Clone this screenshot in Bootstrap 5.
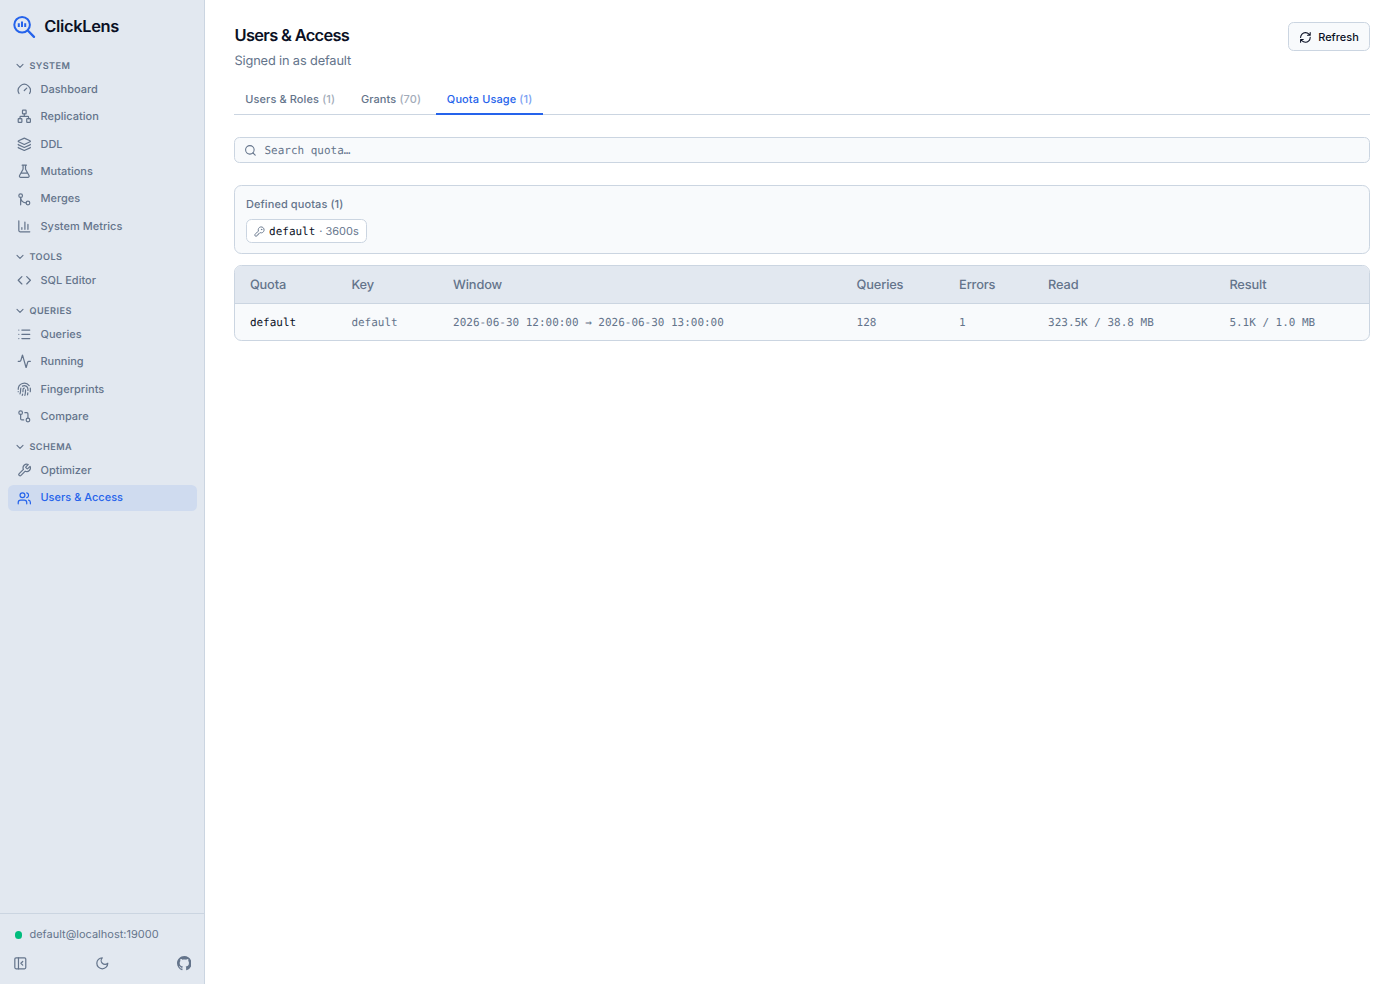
<!DOCTYPE html>
<html lang="en">
<head>
<meta charset="utf-8">
<meta name="viewport" content="width=device-width, initial-scale=1">
<title>ClickLens</title>
<link href="https://cdn.jsdelivr.net/npm/bootstrap@5.3.0/dist/css/bootstrap.min.css" rel="stylesheet">
<style>
:root{--ink:#0a1024;--muted:#64748b;--line:#cbd5e1;--panel:#f8fafc;--side:#e2e8f0;--blue:#2563eb;--mono:"DejaVu Sans Mono",monospace}
body{font-family:Inter,sans-serif;font-size:10.97px;line-height:1.4;color:var(--muted);background:#fff;letter-spacing:.02px;text-rendering:geometricPrecision}
svg{display:block;flex:none;fill:none;stroke:currentColor;stroke-width:2;stroke-linecap:round;stroke-linejoin:round}
.ico{width:14.6px;height:14.6px}
.sidebar{width:205px;background:var(--side);border-right:1px solid var(--line)}
.brand{height:53px;padding-left:12px;gap:8.2px}
.brand-logo{color:var(--blue)}
.brand-name{font-size:16.45px;font-weight:600;color:var(--ink);letter-spacing:-.33px}
.side-menu{padding:5.2px 7.4px 0 8px}
.group-label{height:16px;padding-left:8.4px;gap:5px;margin-bottom:2.4px;font-size:9.14px;font-weight:600;letter-spacing:.45px;line-height:16px}
.group-label svg{stroke-width:3.4}
.group-label span{padding-top:1.4px}
.menu-group+.menu-group{margin-top:10px}
.side-link{height:25.6px;padding:0 8.8px;gap:9.1px;border-radius:5.5px;color:var(--muted);font-weight:500;text-decoration:none}
.side-link+.side-link{margin-top:1.82px}
.side-link.active{background:#cfdbef;color:var(--blue)}
.side-foot{height:71px;border-top:1px solid var(--line);padding:13.3px 12.7px 0 13.2px}
.status-row{gap:7.4px;padding-left:1.6px}
.foot-icons{margin-top:13.7px}
.dot{width:7.3px;height:7.3px;background:#00bc7d}
.main{padding:22px 29.6px 0 29px}
.page-title{font-size:16.45px;font-weight:600;color:var(--ink);letter-spacing:-.68px;line-height:26px;margin:.4px 0 0 .5px}
.subtitle{font-size:12.8px;line-height:18px;letter-spacing:-.15px;margin:5px 0 0 .5px}
.btn-refresh{height:29.2px;width:82.6px;border:1px solid var(--line);background:var(--panel);border-radius:5.5px;font-size:10.97px;font-weight:500;color:var(--ink);padding:1px 0 0;gap:6px;letter-spacing:.02px}
.tabs{margin-top:13.6px;height:30px;border-bottom:1px solid var(--line);gap:3.6px;letter-spacing:.12px}
.tab{padding:0 10.9px 0 11.2px;height:30px;line-height:29.4px;font-weight:500;color:var(--muted);text-decoration:none;border-bottom:2px solid transparent;white-space:pre}
.tab span{opacity:.6}
.tab.active{color:var(--blue);border-color:var(--blue)}
.box{border:1px solid var(--line);background:var(--panel);border-radius:7.3px}
.search{margin-top:22px;height:26px;border-radius:5.5px;padding-left:8.6px;gap:8.1px}
.mono{font-family:var(--mono);font-size:10.97px;letter-spacing:0;padding-top:1px}
.strong-ink{color:var(--ink)!important}
.quotas{margin-top:22px;height:69px;padding:11.3px 11px}
.quota-title{font-weight:500;letter-spacing:.1px}
.chip{border:1px solid var(--line);background:#fff;border-radius:5.5px;height:24px;width:121px;padding-left:7.3px;gap:3.8px;margin-top:6.4px}
.chip-window{padding-top:1px}
.grid-box{margin-top:11px;height:76px;overflow:hidden}
.grid-box table{table-layout:fixed;width:100%;border-collapse:collapse}
.grid-box th{height:38px;padding:3px 0 0 14.9px;background:var(--side);border-bottom:1px solid var(--line);font-size:12.8px;font-weight:500;letter-spacing:-.15px}
.grid-box td{height:36px;padding:0 0 0 14.9px;font-family:var(--mono);letter-spacing:0;white-space:nowrap}
</style>
</head>
<body>
<div class="d-flex vh-100 overflow-hidden">
<aside class="sidebar d-flex flex-column flex-shrink-0">
  <div class="brand d-flex align-items-center">
    <svg class="brand-logo" width="24" height="24" viewBox="0 0 24 24"><circle cx="10.1" cy="9.7" r="7.8"/><path d="m15.8 15.5 6.2 6.4" stroke-width="2.3"/><path d="M6.8 8.2v3.8M10 6.6V12M13.2 8.2V12" stroke-width="2" stroke-linecap="butt"/></svg>
    <span class="brand-name">ClickLens</span>
  </div>
  <nav class="side-menu flex-grow-1">
    <div class="menu-group">
      <div class="group-label d-flex align-items-center"><svg width="8" height="8" viewBox="0 0 24 24"><path d="m3 7 9 9 9-9"/></svg><span>SYSTEM</span></div>
      <a class="side-link d-flex align-items-center"><svg class="ico" viewBox="0 0 24 24"><path d="m12 14 4-4M3.34 19a10 10 0 1 1 17.32 0"/></svg>Dashboard</a>
      <a class="side-link d-flex align-items-center"><svg class="ico" viewBox="0 0 24 24"><rect x="16" y="16" width="6" height="6" rx="1"/><rect x="2" y="16" width="6" height="6" rx="1"/><rect x="9" y="2" width="6" height="6" rx="1"/><path d="M5 16v-3a1 1 0 0 1 1-1h12a1 1 0 0 1 1 1v3M12 12V8"/></svg>Replication</a>
      <a class="side-link d-flex align-items-center"><svg class="ico" viewBox="0 0 24 24"><path d="M12.83 2.18a2 2 0 0 0-1.66 0L2.6 6.08a1 1 0 0 0 0 1.83l8.58 3.91a2 2 0 0 0 1.66 0l8.58-3.9a1 1 0 0 0 0-1.83zM2 12a1 1 0 0 0 .58.91l8.6 3.91a2 2 0 0 0 1.65 0l8.58-3.9A1 1 0 0 0 22 12M2 17a1 1 0 0 0 .58.91l8.6 3.91a2 2 0 0 0 1.65 0l8.58-3.9A1 1 0 0 0 22 17"/></svg>DDL</a>
      <a class="side-link d-flex align-items-center"><svg class="ico" viewBox="0 0 24 24"><path d="M14 2v6a2 2 0 0 0 .245.96l5.51 10.08A2 2 0 0 1 18 22H6a2 2 0 0 1-1.755-2.96l5.51-10.08A2 2 0 0 0 10 8V2M6.453 15h11.094M8.5 2h7"/></svg>Mutations</a>
      <a class="side-link d-flex align-items-center"><svg class="ico" viewBox="0 0 24 24"><circle cx="18" cy="18" r="3"/><circle cx="6" cy="6" r="3"/><path d="M6 21V9a9 9 0 0 0 9 9"/></svg>Merges</a>
      <a class="side-link d-flex align-items-center"><svg class="ico" viewBox="0 0 24 24"><path d="M3 3v16a2 2 0 0 0 2 2h16M18 17V9M13 17V5M8 17v-3"/></svg>System Metrics</a>
    </div>
    <div class="menu-group">
      <div class="group-label d-flex align-items-center"><svg width="8" height="8" viewBox="0 0 24 24"><path d="m3 7 9 9 9-9"/></svg><span>TOOLS</span></div>
      <a class="side-link d-flex align-items-center"><svg class="ico" viewBox="0 0 24 24"><path d="m16 18 6-6-6-6M8 6l-6 6 6 6"/></svg>SQL Editor</a>
    </div>
    <div class="menu-group">
      <div class="group-label d-flex align-items-center"><svg width="8" height="8" viewBox="0 0 24 24"><path d="m3 7 9 9 9-9"/></svg><span>QUERIES</span></div>
      <a class="side-link d-flex align-items-center"><svg class="ico" viewBox="0 0 24 24"><path d="M3 5h.01M3 12h.01M3 19h.01M8 5h13M8 12h13M8 19h13"/></svg>Queries</a>
      <a class="side-link d-flex align-items-center"><svg class="ico" viewBox="0 0 24 24"><path d="M22 12h-2.48a2 2 0 0 0-1.93 1.46l-2.35 8.36a.25.25 0 0 1-.48 0L9.24 2.18a.25.25 0 0 0-.48 0l-2.35 8.36A2 2 0 0 1 4.49 12H2"/></svg>Running</a>
      <a class="side-link d-flex align-items-center"><svg class="ico" viewBox="0 0 24 24"><path d="M12 10a2 2 0 0 0-2 2c0 1.02-.1 2.51-.26 4M14 13.12c0 2.38 0 6.38-1 8.88M17.29 21.02c.12-.6.43-2.3.5-3.02M2 12a10 10 0 0 1 18-6M2 16h.01M21.8 16c.2-2 .131-5.354 0-6M5 19.5C5.5 18 6 15 6 12a6 6 0 0 1 .34-2M8.65 22c.21-.66.45-1.32.57-2M9 6.8a6 6 0 0 1 9 5.2v2"/></svg>Fingerprints</a>
      <a class="side-link d-flex align-items-center"><svg class="ico" viewBox="0 0 24 24"><circle cx="18" cy="18" r="3"/><circle cx="6" cy="6" r="3"/><path d="M13 6h3a2 2 0 0 1 2 2v7M11 18H8a2 2 0 0 1-2-2V9"/></svg>Compare</a>
    </div>
    <div class="menu-group">
      <div class="group-label d-flex align-items-center"><svg width="8" height="8" viewBox="0 0 24 24"><path d="m3 7 9 9 9-9"/></svg><span>SCHEMA</span></div>
      <a class="side-link d-flex align-items-center"><svg class="ico" viewBox="0 0 24 24"><path d="M14.7 6.3a1 1 0 0 0 0 1.4l1.6 1.6a1 1 0 0 0 1.4 0l3.77-3.77a6 6 0 0 1-7.94 7.94l-6.91 6.91a2.12 2.12 0 0 1-3-3l6.91-6.91a6 6 0 0 1 7.94-7.94z"/></svg>Optimizer</a>
      <a class="side-link active d-flex align-items-center"><svg class="ico" viewBox="0 0 24 24"><path d="M16 21v-2a4 4 0 0 0-4-4H6a4 4 0 0 0-4 4v2M16 3.128a4 4 0 0 1 0 7.744M22 21v-2a4 4 0 0 0-3-3.87"/><circle cx="9" cy="7" r="4"/></svg>Users &amp; Access</a>
    </div>
  </nav>
  <div class="side-foot">
    <div class="status-row d-flex align-items-center"><span class="dot rounded-circle"></span><span>default@localhost:19000</span></div>
    <div class="foot-icons d-flex align-items-center justify-content-between">
      <svg class="ico" viewBox="0 0 24 24"><rect x="3" y="3" width="18" height="18" rx="2"/><path d="M9 3v18M16 15l-3-3 3-3"/></svg>
      <svg class="ico" viewBox="0 0 24 24"><path d="M12 3a6 6 0 0 0 9 9 9 9 0 1 1-9-9Z"/></svg>
      <svg class="ico" viewBox="0 0 16 16" style="fill:currentColor;stroke:none"><path d="M8 0C3.58 0 0 3.58 0 8c0 3.54 2.29 6.53 5.47 7.59.4.07.55-.17.55-.38 0-.19-.01-.82-.01-1.49-2.01.37-2.53-.49-2.69-.94-.09-.23-.48-.94-.82-1.13-.28-.15-.68-.52-.01-.53.63-.01 1.08.58 1.23.82.72 1.21 1.87.87 2.33.66.07-.52.28-.87.51-1.07-1.78-.2-3.64-.89-3.64-3.95 0-.87.31-1.59.82-2.15-.08-.2-.36-1.02.08-2.12 0 0 .67-.21 2.2.82.64-.18 1.32-.27 2-.27s1.36.09 2 .27c1.53-1.04 2.2-.82 2.2-.82.44 1.1.16 1.92.08 2.12.51.56.82 1.27.82 2.15 0 3.07-1.87 3.75-3.65 3.95.29.25.54.73.54 1.48 0 1.07-.01 1.93-.01 2.2 0 .21.15.46.55.38A8.01 8.01 0 0 0 16 8c0-4.42-3.58-8-8-8"/></svg>
    </div>
  </div>
</aside>
<main class="main flex-grow-1">
  <header class="d-flex justify-content-between align-items-start">
    <div><h1 class="page-title">Users &amp; Access</h1><div class="subtitle">Signed in as default</div></div>
    <button class="btn btn-refresh d-flex align-items-center justify-content-center"><svg width="12.8" height="12.8" viewBox="0 0 24 24"><path d="M3 12a9 9 0 0 1 9-9 9.75 9.75 0 0 1 6.74 2.74L21 8M21 3v5h-5M21 12a9 9 0 0 1-9 9 9.75 9.75 0 0 1-6.74-2.74L3 16M8 16H3v5"/></svg>Refresh</button>
  </header>
  <nav class="tabs d-flex"><a class="tab">Users &amp; Roles <span>(1)</span></a><a class="tab">Grants <span>(70)</span></a><a class="tab active">Quota Usage <span>(1)</span></a></nav>
  <div class="box search d-flex align-items-center"><svg width="12.8" height="12.8" viewBox="0 0 24 24"><circle cx="11" cy="11" r="8"/><path d="m21 21-4.34-4.34"/></svg><span class="mono">Search quota…</span></div>
  <section class="box quotas">
    <div class="quota-title">Defined quotas (1)</div>
    <div class="chip d-flex align-items-center"><svg width="11" height="11" viewBox="0 0 24 24"><path d="M2.586 17.414A2 2 0 0 0 2 18.828V21a1 1 0 0 0 1 1h3a1 1 0 0 0 1-1v-1a1 1 0 0 1 1-1h1a1 1 0 0 0 1-1v-1a1 1 0 0 1 1-1h.172a2 2 0 0 0 1.414-.586l.814-.814a6.5 6.5 0 1 0-4-4z"/><circle cx="16.5" cy="7.5" r=".5" fill="currentColor"/></svg><span class="mono strong-ink">default</span><span class="chip-window">· 3600s</span></div>
  </section>
  <section class="box grid-box">
    <table>
      <colgroup><col style="width:101.5px"><col style="width:101.7px"><col style="width:403.5px"><col style="width:102.5px"><col style="width:89px"><col style="width:181.3px"><col></colgroup>
      <thead><tr><th>Quota</th><th>Key</th><th>Window</th><th>Queries</th><th>Errors</th><th>Read</th><th>Result</th></tr></thead>
      <tbody><tr><td class="strong-ink">default</td><td>default</td><td>2026-06-30 12:00:00 → 2026-06-30 13:00:00</td><td>128</td><td>1</td><td>323.5K / 38.8 MB</td><td>5.1K / 1.0 MB</td></tr></tbody>
    </table>
  </section>
</main>
</div>
<script src="https://cdn.jsdelivr.net/npm/bootstrap@5.3.0/dist/js/bootstrap.bundle.min.js"></script>
</body>
</html>
